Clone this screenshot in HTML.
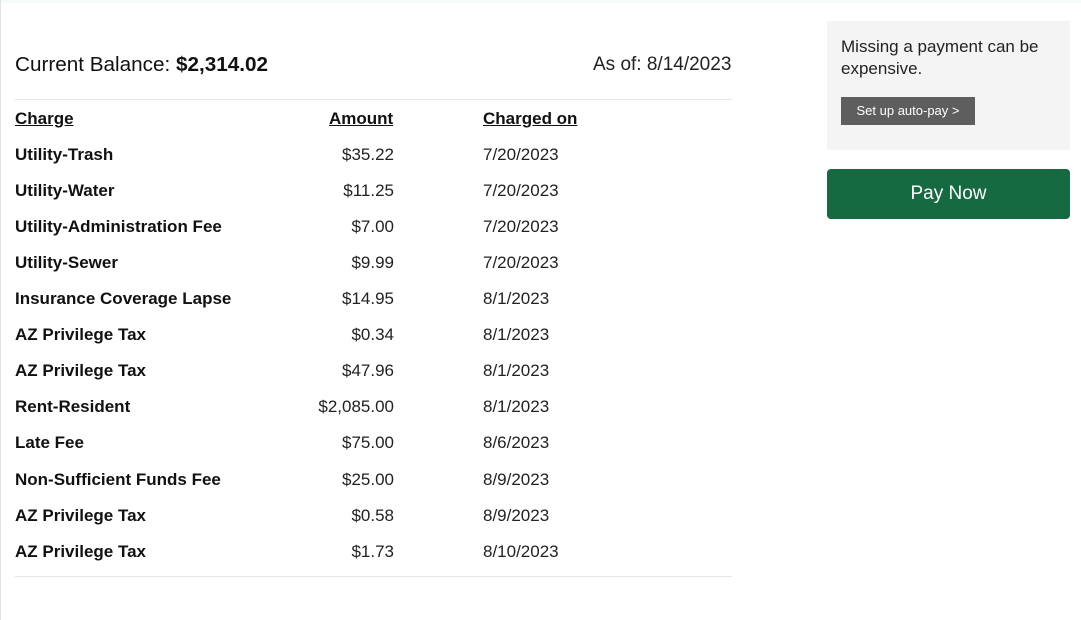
<!DOCTYPE html>
<html><head><style>
body{margin:0;width:1081px;height:620px;background:#fff;font-family:"Liberation Sans",Arial,sans-serif;color:#111;position:relative;overflow:hidden}
.lb{position:absolute;left:0;top:0;width:1px;height:620px;background:#e2e2e2}
.tb{position:absolute;left:0;top:0;width:1081px;height:3px;background:#f3fbfb}
.bal{position:absolute;left:15px;top:53px;font-size:20.7px}
.asof{position:absolute;left:593px;top:54px;font-size:19px;color:#222}
.hr{position:absolute;left:15px;width:717px;height:1px;background:#e6e6e6}
.row{position:absolute;left:15px;height:36px;font-size:17px;line-height:20px}
.row span{position:absolute;white-space:nowrap}
.c1{left:0;font-weight:bold}
.amt{left:0;width:379px;text-align:right;color:#222}
.c3{left:468px;color:#222}
.h span{text-decoration:underline;font-weight:bold;color:#111}
.box{position:absolute;left:827px;top:21px;width:243px;height:129px;background:#f4f4f4}
.box p{margin:0;position:absolute;left:14px;top:15px;font-size:17px;line-height:22px;color:#222}
.ap{position:absolute;left:14px;top:76px;width:134px;height:28px;background:#5e5e5e;color:#fff;font-size:13px;line-height:28px;text-align:center}
.pay{position:absolute;left:827px;top:169px;width:243px;height:50px;background:#156a41;border-radius:4px;color:#fff;font-size:19px;line-height:50px;text-align:center}
</style></head><body>
<div class="tb"></div><div class="lb"></div>
<div class="bal">Current Balance: <b>$2,314.02</b></div>
<div class="asof">As of: 8/14/2023</div>
<div class="hr" style="top:99px"></div>
<div class="row h" style="top:109px"><span class="c1">Charge</span><span style="left:314px">Amount</span><span class="c3">Charged on</span></div>
<div class="row" style="top:145px"><span class="c1">Utility-Trash</span><span class="amt">$35.22</span><span class="c3">7/20/2023</span></div>
<div class="row" style="top:181px"><span class="c1">Utility-Water</span><span class="amt">$11.25</span><span class="c3">7/20/2023</span></div>
<div class="row" style="top:217px"><span class="c1">Utility-Administration Fee</span><span class="amt">$7.00</span><span class="c3">7/20/2023</span></div>
<div class="row" style="top:253px"><span class="c1">Utility-Sewer</span><span class="amt">$9.99</span><span class="c3">7/20/2023</span></div>
<div class="row" style="top:289px"><span class="c1">Insurance Coverage Lapse</span><span class="amt">$14.95</span><span class="c3">8/1/2023</span></div>
<div class="row" style="top:325px"><span class="c1">AZ Privilege Tax</span><span class="amt">$0.34</span><span class="c3">8/1/2023</span></div>
<div class="row" style="top:361px"><span class="c1">AZ Privilege Tax</span><span class="amt">$47.96</span><span class="c3">8/1/2023</span></div>
<div class="row" style="top:397px"><span class="c1">Rent-Resident</span><span class="amt">$2,085.00</span><span class="c3">8/1/2023</span></div>
<div class="row" style="top:433px"><span class="c1">Late Fee</span><span class="amt">$75.00</span><span class="c3">8/6/2023</span></div>
<div class="row" style="top:470px"><span class="c1">Non-Sufficient Funds Fee</span><span class="amt">$25.00</span><span class="c3">8/9/2023</span></div>
<div class="row" style="top:506px"><span class="c1">AZ Privilege Tax</span><span class="amt">$0.58</span><span class="c3">8/9/2023</span></div>
<div class="row" style="top:542px"><span class="c1">AZ Privilege Tax</span><span class="amt">$1.73</span><span class="c3">8/10/2023</span></div>
<div class="hr" style="top:576px"></div>
<div class="box"><p>Missing a payment can be<br>expensive.</p><div class="ap">Set up auto-pay &gt;</div></div>
<div class="pay">Pay Now</div>
</body></html>
